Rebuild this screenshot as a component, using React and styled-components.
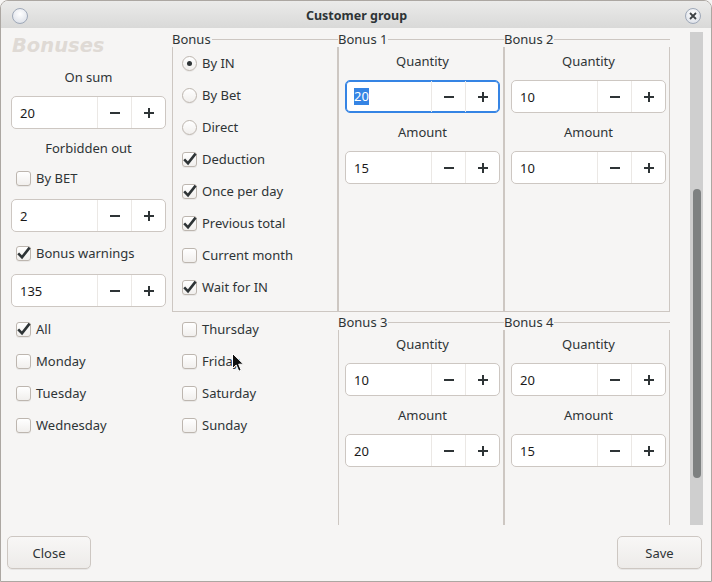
import React from 'react';
import styled, { createGlobalStyle } from 'styled-components';

const Global = createGlobalStyle`
  html, body { margin: 0; padding: 0; background: #f6f5f4; }
  body { font-family: "Noto Sans", "DejaVu Sans", sans-serif; font-size: 13px; color: #2e3436; }
  * { box-sizing: border-box; }
`;

const Window = styled.div`
  position: relative;
  width: 712px;
  height: 582px;
  border: 1px solid #aca7a2;
  border-radius: 8px 8px 0 0;
  overflow: hidden;
  display: flex;
  flex-direction: column;
  background: #f6f5f4;
`;

const TitleBar = styled.div`
  height: 27px;
  flex: none;
  display: grid;
  grid-template-columns: 1fr auto 1fr;
  align-items: center;
  padding: 0 10px 0 11px;
  background: linear-gradient(#ebebea, #d9d9d8);
`;

const Title = styled.div`
  font-weight: 700;
  font-size: 12.5px;
  color: #2e3436;
  padding-top: 2px;
`;

const TitleOrb = styled.div`
  width: 16px;
  height: 16px;
  border-radius: 50%;
  border: 1px solid #9ea8b8;
  background: radial-gradient(circle at 50% 35%, #ffffff, #e3e6ec 70%, #cfd4de);
  justify-self: ${p => (p.$end ? 'end' : 'start')};
  margin-top: 2px;
  display: flex;
  align-items: center;
  justify-content: center;
`;

const Main = styled.div`
  flex: 1;
  display: flex;
  flex-direction: column;
  min-height: 0;
`;

const ScrollArea = styled.div`
  height: 497px;
  flex: none;
  display: flex;
`;

const Viewport = styled.div`
  flex: 1;
  overflow: hidden;
  padding-top: 3px;
`;

const Trough = styled.div`
  width: 13px;
  margin: 4px 8px 0 0;
  background: #cfcfcf;
  display: flex;
  justify-content: center;
`;

const Thumb = styled.div`
  width: 8px;
  height: 289px;
  margin-top: 157px;
  border-radius: 4px;
  background: #7e8181;
`;

const Grid = styled.div`
  display: grid;
  grid-template-columns: 171px 166px 166px 166px;
  grid-template-rows: auto 260px;
`;

const LeftCol = styled.div`
  display: flex;
  flex-direction: column;
  gap: 10px;
  padding: 5px 0 0 10px;
`;

const Heading = styled.div`
  font-family: "DejaVu Sans", "Noto Sans", sans-serif;
  font-size: 19.5px;
  line-height: 20px;
  height: 20px;
  font-weight: 700;
  font-style: italic;
  color: #dfdad5;
  padding-left: 1px;
  margin-bottom: 2px;
`;

const CenterLabel = styled.div`
  width: 155px;
  height: 18px;
  line-height: 18px;
  text-align: center;
  font-size: 13px;
`;

const Spin = styled.div`
  display: flex;
  width: 155px;
  height: 33px;
  flex: none;
  background: #fff;
  border: 1px solid ${p => (p.$focus ? '#3584e4' : '#cdc7c2')};
  box-shadow: ${p => (p.$focus ? 'inset 0 0 0 1px #3584e4' : 'none')};
  border-radius: 5px;
  overflow: hidden;
`;

const SpinEntry = styled.div`
  flex: 1;
  display: flex;
  align-items: center;
  padding-left: 8px;
  font-size: 13px;
  color: #1a1a1a;
`;

const Selected = styled.span`
  background: #3584e4;
  color: #fff;
  line-height: 17px;
`;

const SpinBtn = styled.div`
  width: 34px;
  flex: none;
  border-left: 1px solid #ebe8e5;
  display: flex;
  align-items: center;
  justify-content: center;
`;

const CheckRow = styled.label`
  display: flex;
  align-items: center;
  gap: 5px;
  height: ${p => p.$h || 22}px;
  padding-left: ${p => p.$indent || 0}px;
  font-size: 13px;
  white-space: nowrap;
`;

const Box = styled.span`
  width: 15px;
  height: 15px;
  flex: none;
  border: 1px solid #bdb6af;
  border-radius: 3px;
  background: linear-gradient(#ffffff, #f1efed);
  box-shadow: 0 1px rgba(0, 0, 0, 0.05);
  position: relative;
  display: flex;
  align-items: center;
  justify-content: center;
`;

const Radio = styled(Box)`
  border-radius: 50%;
`;

const Dot = styled.span`
  width: 5px;
  height: 5px;
  border-radius: 50%;
  background: #2e3436;
`;

const CheckSvg = styled.svg`
  position: absolute;
  left: -1px;
  top: -1px;
  overflow: visible;
`;

const Frame = styled.div`
  display: flex;
  flex-direction: column;
  margin-top: ${p => p.$top || 0}px;
  min-height: 0;
`;

const FrameHead = styled.div`
  display: flex;
  align-items: center;
  height: 16px;
  flex: none;
`;

const FrameLabel = styled.span`
  font-size: 13px;
  line-height: 16px;
  padding-right: 1px;
`;

const FrameLine = styled.div`
  flex: 1;
  height: 1px;
  background: #cdc7c2;
`;

const FrameBody = styled.div`
  flex: 1;
  border: 1px solid #cdc7c2;
  border-top: none;
  display: flex;
  flex-direction: column;
  gap: ${p => p.$gap || 0}px;
  padding: ${p => p.$pad};
`;

const ListCol = styled.div`
  display: flex;
  flex-direction: column;
  padding: 1px 0 0 ${p => p.$indent}px;
`;

const WeekRow = styled(CheckRow)`
  height: 32px;
`;

const BottomBar = styled.div`
  flex: 1;
  display: flex;
  justify-content: space-between;
  align-items: flex-start;
  padding: 11px 9px 0 6px;
`;

const Button = styled.button`
  width: ${p => p.$w}px;
  height: 33px;
  border: 1px solid #cdc7c2;
  border-radius: 5px;
  background: linear-gradient(#f8f7f6, #edebe9);
  box-shadow: 0 1px rgba(0, 0, 0, 0.06);
  font-family: inherit;
  font-size: 13px;
  color: #2e3436;
  padding: 0;
`;

const Cursor = styled.svg`
  position: absolute;
  left: 231px;
  top: 352px;
`;

const Minus = () => (
  <svg width="12" height="12" viewBox="0 0 12 12">
    <rect x="1" y="5" width="10" height="2" fill="#2e3436" />
  </svg>
);
const Plus = () => (
  <svg width="12" height="12" viewBox="0 0 12 12">
    <rect x="1" y="5" width="10" height="2" fill="#2e3436" />
    <rect x="5" y="1" width="2" height="10" fill="#2e3436" />
  </svg>
);

const SpinBox = ({ value, focus }) => (
  <Spin $focus={focus}>
    <SpinEntry>{focus ? <Selected>{value}</Selected> : value}</SpinEntry>
    <SpinBtn><Minus /></SpinBtn>
    <SpinBtn><Plus /></SpinBtn>
  </Spin>
);

const Check = ({ checked }) => (
  <Box>
    {checked && (
      <CheckSvg width="15" height="15" viewBox="0 0 15 15">
        <path d="M2.2 7.4 L6 11.3 L13.6 1.6" fill="none" stroke="#2e3436" strokeWidth="2.6" strokeLinejoin="miter" />
      </CheckSvg>
    )}
  </Box>
);

const RadioBtn = ({ on }) => <Radio>{on && <Dot />}</Radio>;

const BonusBox = ({ title, q, a, focus, top }) => (
  <Frame $top={top}>
    <FrameHead>
      <FrameLabel>{title}</FrameLabel>
      <FrameLine />
    </FrameHead>
    <FrameBody $gap={10} $pad="5px 0 0 6px">
      <CenterLabel>Quantity</CenterLabel>
      <SpinBox value={q} focus={focus} />
      <CenterLabel>Amount</CenterLabel>
      <SpinBox value={a} />
    </FrameBody>
  </Frame>
);

const bonusOpts = [
  { t: 'By IN', r: true, on: true },
  { t: 'By Bet', r: true },
  { t: 'Direct', r: true },
  { t: 'Deduction', on: true },
  { t: 'Once per day', on: true },
  { t: 'Previous total', on: true },
  { t: 'Current month' },
  { t: 'Wait for IN', on: true },
];

export default function App() {
  return (
    <>
      <Global />
      <Window>
        <TitleBar>
          <TitleOrb />
          <Title>Customer group</Title>
          <TitleOrb $end>
            <svg width="8" height="8" viewBox="0 0 8 8">
              <path d="M1 1 L7 7 M7 1 L1 7" stroke="#3d4245" strokeWidth="1.8" />
            </svg>
          </TitleOrb>
        </TitleBar>
        <Main>
          <ScrollArea>
            <Viewport>
              <Grid>
                <LeftCol>
                  <Heading>Bonuses</Heading>
                  <CenterLabel>On sum</CenterLabel>
                  <SpinBox value="20" />
                  <CenterLabel>Forbidden out</CenterLabel>
                  <CheckRow $indent={5}><Check />By BET</CheckRow>
                  <SpinBox value="2" />
                  <CheckRow $indent={5}><Check checked />Bonus warnings</CheckRow>
                  <SpinBox value="135" />
                </LeftCol>
                <Frame>
                  <FrameHead>
                    <FrameLabel>Bonus</FrameLabel>
                    <FrameLine />
                  </FrameHead>
                  <FrameBody $pad="0 0 8px 9px">
                    {bonusOpts.map(o => (
                      <CheckRow key={o.t} $h={32}>
                        {o.r ? <RadioBtn on={o.on} /> : <Check checked={o.on} />}
                        {o.t}
                      </CheckRow>
                    ))}
                  </FrameBody>
                </Frame>
                <BonusBox title="Bonus 1" q="20" a="15" focus />
                <BonusBox title="Bonus 2" q="10" a="10" />
                <ListCol $indent={15}>
                  <WeekRow><Check checked />All</WeekRow>
                  <WeekRow><Check />Monday</WeekRow>
                  <WeekRow><Check />Tuesday</WeekRow>
                  <WeekRow><Check />Wednesday</WeekRow>
                </ListCol>
                <ListCol $indent={10}>
                  <WeekRow><Check />Thursday</WeekRow>
                  <WeekRow><Check />Friday</WeekRow>
                  <WeekRow><Check />Saturday</WeekRow>
                  <WeekRow><Check />Sunday</WeekRow>
                </ListCol>
                <BonusBox title="Bonus 3" q="10" a="20" top={2} />
                <BonusBox title="Bonus 4" q="20" a="15" top={2} />
              </Grid>
            </Viewport>
            <Trough><Thumb /></Trough>
          </ScrollArea>
          <BottomBar>
            <Button $w={84}>Close</Button>
            <Button $w={85}>Save</Button>
          </BottomBar>
        </Main>
        <Cursor width="13" height="20" viewBox="0 0 13 20">
          <path d="M0.5 0.5 L0.5 15.5 L4.2 12 L6.8 18.2 L9.2 17.2 L6.7 11.2 L11.5 11.2 Z" fill="#111" stroke="#fff" strokeWidth="1" strokeLinejoin="round" />
        </Cursor>
      </Window>
    </>
  );
}
